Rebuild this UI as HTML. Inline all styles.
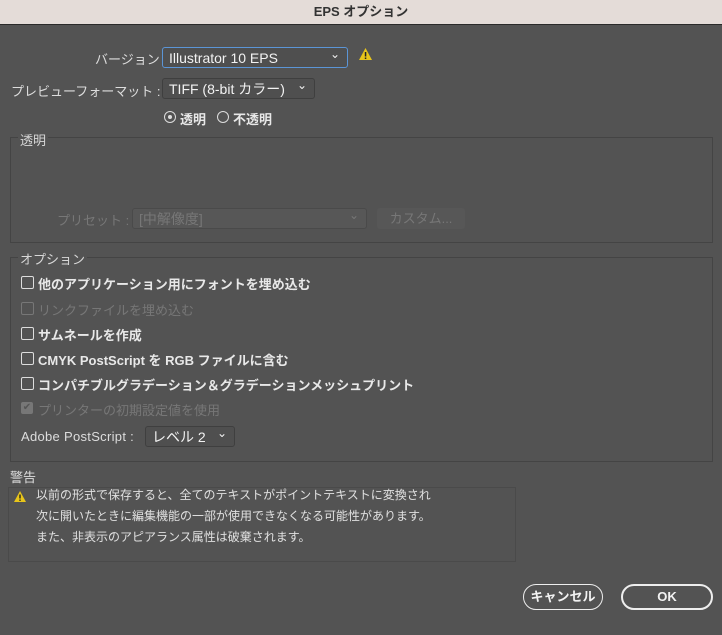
<!DOCTYPE html><html><head><style>
body{margin:0;width:722px;height:635px;background:#535353;font-family:"Liberation Sans","Noto Sans CJK JP",sans-serif;color:#e8e8e8;font-size:13px;position:relative;overflow:hidden}
.a{position:absolute;white-space:nowrap}
.title{left:0;top:0;width:722px;height:24px;background:#e4dcd8;border-bottom:1px solid #2a2a2a;color:#333;font-weight:bold;text-align:center;line-height:24px;font-size:13px}
.dd{border:1px solid #3f3f3f;background:#4f4f4f;border-radius:3px;box-sizing:border-box;padding-left:6px;line-height:20px;color:#f2f2f2;font-size:14px}
.dd:after{content:"⌄";position:absolute;right:7px;top:-4px;font-size:12px}
.box{border:1px solid #444;box-sizing:border-box}
.lbl{background:#535353;padding:0 2px;color:#d8d8d8;font-size:13px}
.cb{width:11px;height:11px;border:1px solid #ddd;border-radius:2px}
.bold{font-weight:bold;font-size:13px}
.dis{color:#777}
.btn{border:2px solid #eee;border-radius:13px;box-sizing:border-box;text-align:center;font-weight:bold;line-height:22px;color:#f2f2f2}
</style></head><body>
<div class="a title">EPS オプション</div>
<div class="a" style="left:95px;top:49px;font-size:13px;color:#ddd">バージョン</div>
<div class="a dd" style="left:162px;top:47px;width:186px;height:21px;border-color:#5b95d6">Illustrator 10 EPS</div>
<svg class="a" style="left:358px;top:47px" width="15" height="14"><path d="M7.5 1L14 13H1z" fill="#e8c51a"/><rect x="6.8" y="5" width="1.5" height="4.5" fill="#222"/><rect x="6.8" y="10.5" width="1.5" height="1.5" fill="#222"/></svg>
<div class="a" style="left:11px;top:81px;font-size:13px;color:#ddd">プレビューフォーマット :</div>
<div class="a dd" style="left:162px;top:78px;width:153px;height:21px">TIFF (8-bit カラー)</div>
<div class="a" style="left:164px;top:111px;width:10px;height:10px;border:1px solid #ddd;border-radius:50%"></div>
<div class="a" style="left:168px;top:115px;width:4px;height:4px;background:#ddd;border-radius:50%"></div>
<div class="a bold" style="left:180px;top:109px">透明</div>
<div class="a" style="left:217px;top:111px;width:10px;height:10px;border:1px solid #ddd;border-radius:50%"></div>
<div class="a bold" style="left:233px;top:109px">不透明</div>
<div class="a box" style="left:10px;top:137px;width:703px;height:106px"></div>
<div class="a lbl" style="left:18px;top:130px">透明</div>
<div class="a dis" style="left:57px;top:210px;font-size:13px">プリセット :</div>
<div class="a dd" style="left:132px;top:208px;width:235px;height:21px;color:#777;border-color:#4a4a4a;background:#575757">[中解像度]</div>
<div class="a" style="left:377px;top:208px;width:88px;height:21px;background:#575757;border-radius:3px;color:#777;text-align:center;line-height:21px;font-size:13px">カスタム...</div>
<div class="a box" style="left:10px;top:257px;width:703px;height:205px"></div>
<div class="a lbl" style="left:18px;top:249px">オプション</div>
<div class="a cb" style="left:21px;top:276px"></div><div class="a bold" style="left:38px;top:274px">他のアプリケーション用にフォントを埋め込む</div>
<div class="a cb" style="left:21px;top:302px;border-color:#777"></div><div class="a dis" style="left:38px;top:300px;font-size:13px">リンクファイルを埋め込む</div>
<div class="a cb" style="left:21px;top:327px"></div><div class="a bold" style="left:38px;top:325px">サムネールを作成</div>
<div class="a cb" style="left:21px;top:352px"></div><div class="a bold" style="left:38px;top:350px">CMYK PostScript を RGB ファイルに含む</div>
<div class="a cb" style="left:21px;top:377px"></div><div class="a bold" style="left:38px;top:375px">コンパチブルグラデーション＆グラデーションメッシュプリント</div>
<div class="a" style="left:21px;top:402px;width:12px;height:12px;background:#777;border-radius:2px;color:#555;font-size:10px;line-height:12px;text-align:center">✔</div><div class="a dis" style="left:38px;top:400px;font-size:13px">プリンターの初期設定値を使用</div>
<div class="a" style="left:21px;top:429px;font-size:13px;color:#ddd;letter-spacing:0.3px">Adobe PostScript :</div>
<div class="a dd" style="left:145px;top:426px;width:90px;height:21px">レベル 2</div>
<div class="a" style="left:10px;top:467px;font-size:13px;color:#ddd">警告</div>
<div class="a box" style="left:8px;top:487px;width:508px;height:75px;border-color:#4a4a4a"></div>
<svg class="a" style="left:13px;top:490px" width="14" height="13"><path d="M7 1L13 12H1z" fill="#e8c51a"/><rect x="6.3" y="4.5" width="1.4" height="4" fill="#222"/><rect x="6.3" y="9.5" width="1.4" height="1.4" fill="#222"/></svg>
<div class="a" style="left:36px;top:485px;font-size:12px;line-height:21px;color:#e0e0e0">以前の形式で保存すると、全てのテキストがポイントテキストに変換され<br>次に開いたときに編集機能の一部が使用できなくなる可能性があります。<br>また、非表示のアピアランス属性は破棄されます。</div>
<div class="a btn" style="left:523px;top:584px;width:80px;height:26px;border-width:1px;font-size:13px;line-height:24px">キャンセル</div>
<div class="a btn" style="left:621px;top:584px;width:92px;height:26px;font-size:13px">OK</div>
</body></html>
